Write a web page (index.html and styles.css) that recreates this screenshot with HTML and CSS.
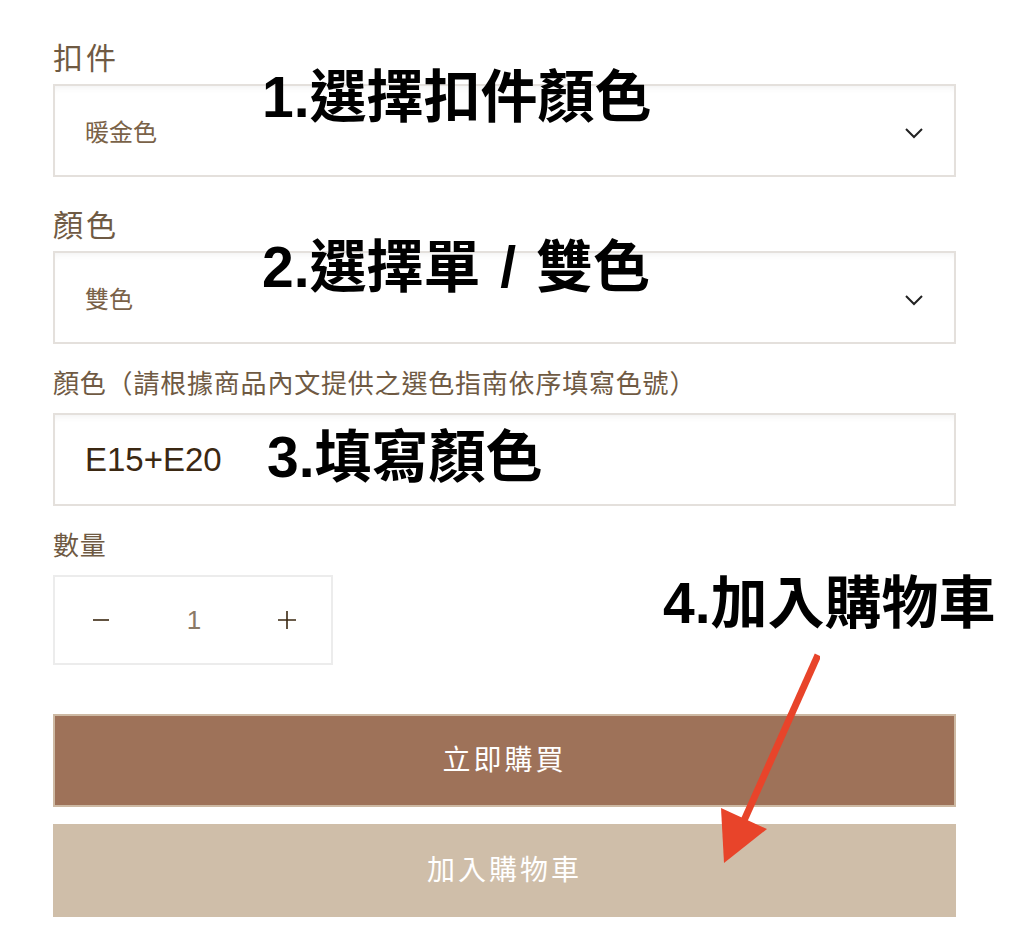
FILE: index.html
```html
<!DOCTYPE html>
<html lang="zh-Hant">

<head>
    <meta charset="UTF-8">
    <meta name="viewport" content="width=device-width, initial-scale=1.0">
    <title>商品選項</title>
    <link rel="stylesheet" href="styles.css">
</head>

<body>
    <div class="page">
        <form class="product-form">
            <div class="field">
                <label class="field-label">扣件</label>
                <div class="select-box">
                    <span class="select-value">暖金色</span>
                    <svg class="chevron" width="20" height="12" viewBox="0 0 20 12">
                        <path d="M2 2 L10 10 L18 2" fill="none" stroke="#222" stroke-width="2" />
                    </svg>
                </div>
            </div>

            <div class="field field-tight">
                <label class="field-label">顏色</label>
                <div class="select-box">
                    <span class="select-value">雙色</span>
                    <svg class="chevron" width="20" height="12" viewBox="0 0 20 12">
                        <path d="M2 2 L10 10 L18 2" fill="none" stroke="#222" stroke-width="2" />
                    </svg>
                </div>
            </div>

            <div class="field field-small">
                <label class="field-label small">顏色（請根據商品內文提供之選色指南依序填寫色號）</label>
                <div class="text-box">
                    <span class="text-value">E15+E20</span>
                </div>
            </div>

            <div class="field field-small">
                <label class="field-label small">數量</label>
                <div class="quantity">
                    <button type="button" class="qty-btn" aria-label="減少">
                        <svg width="18" height="18" viewBox="0 0 18 18">
                            <path d="M1 9 H17" stroke="#3b2812" stroke-width="1.6" />
                        </svg>
                    </button>
                    <span class="qty-value">1</span>
                    <button type="button" class="qty-btn" aria-label="增加">
                        <svg width="20" height="20" viewBox="0 0 20 20">
                            <path d="M1 10 H19 M10 1 V19" stroke="#3b2812" stroke-width="1.6" />
                        </svg>
                    </button>
                </div>
            </div>

            <div class="actions">
                <button type="button" class="btn btn-buy">立即購買</button>
                <button type="button" class="btn btn-cart">加入購物車</button>
            </div>
        </form>

        <!-- 教學標註 -->
        <div class="note note-1">1.選擇扣件顏色</div>
        <div class="note note-2">2.選擇單 / 雙色</div>
        <div class="note note-3">3.填寫顏色</div>
        <div class="note note-4">4.加入購物車</div>
        <svg class="arrow" width="120" height="230" viewBox="0 0 120 230">
            <path d="M118 5 L42 175" stroke="#e8442a" stroke-width="7" />
            <polygon points="21,158 67,179 24,213" fill="#e8442a" />
        </svg>
    </div>
</body>

</html>
```

FILE: styles.css
```css
body {
    margin: 0;
    background: #fff;
    font-family: "Noto Sans CJK TC", "Noto Sans", sans-serif;
}

.page {
    position: relative;
    width: 1032px;
    height: 952px;
    overflow: hidden;
}

.product-form {
    width: 903px;
    padding: 40px 0 0 53px;
}

.field {
    margin-bottom: 30px;
}

.field-tight {
    margin-bottom: 24px;
}

.field-label {
    display: block;
    font-size: 30px;
    line-height: 32px;
    letter-spacing: 3px;
    color: #6f5a43;
    margin-bottom: 12px;
}

.field-label.small {
    font-size: 26px;
    line-height: 28px;
    letter-spacing: 0.8px;
    margin-bottom: 17px;
}

.field-small {
    margin-bottom: 24px;
}

.select-box,
.text-box {
    display: flex;
    align-items: center;
    justify-content: space-between;
    box-sizing: border-box;
    height: 93px;
    padding: 0 30px 0 30px;
    border: 2px solid #e4e0dc;
    box-shadow: inset 0 6px 8px -6px rgba(0, 0, 0, 0.08);
}

.select-value {
    font-size: 24px;
    color: #7a6248;
}

.chevron {
    margin-top: 4px;
}

.text-value {
    font-family: "Liberation Sans", Arial, sans-serif;
    font-size: 33px;
    color: #3b2812;
}

.quantity {
    display: flex;
    align-items: center;
    justify-content: space-between;
    box-sizing: border-box;
    width: 280px;
    height: 90px;
    padding: 0 26px 0 28px;
    border: 2px solid #ececec;
}

.qty-btn {
    display: flex;
    align-items: center;
    justify-content: center;
    width: 36px;
    height: 36px;
    padding: 0;
    background: none;
    border: none;
    cursor: pointer;
}

.qty-value {
    font-family: "Liberation Sans", Arial, sans-serif;
    font-size: 26px;
    color: #8a7967;
}

.actions {
    display: flex;
    flex-direction: column;
    gap: 17px;
    margin-top: 49px;
}

.btn {
    box-sizing: border-box;
    height: 93px;
    width: 100%;
    padding: 0 0 5px;
    font-family: "Noto Sans CJK TC", sans-serif;
    font-size: 28px;
    letter-spacing: 3px;
    color: #fff;
    border: none;
    cursor: pointer;
}

.btn-buy {
    background-color: #9e7259;
    border: 2px solid #cdb9a3;
}

.btn-cart {
    background-color: #cfbea9;
}

.note {
    position: absolute;
    font-family: "Liberation Sans", "Noto Sans CJK TC", sans-serif;
    font-weight: 700;
    font-size: 57px;
    line-height: 57px;
    color: #000;
    white-space: nowrap;
}

.note-1 {
    left: 262px;
    top: 69px;
}

.note-2 {
    left: 262px;
    top: 239px;
    word-spacing: 4px;
}

.note-3 {
    left: 267px;
    top: 429px;
}

.note-4 {
    left: 663px;
    top: 575px;
}

.arrow {
    position: absolute;
    left: 700px;
    top: 650px;
}
```
